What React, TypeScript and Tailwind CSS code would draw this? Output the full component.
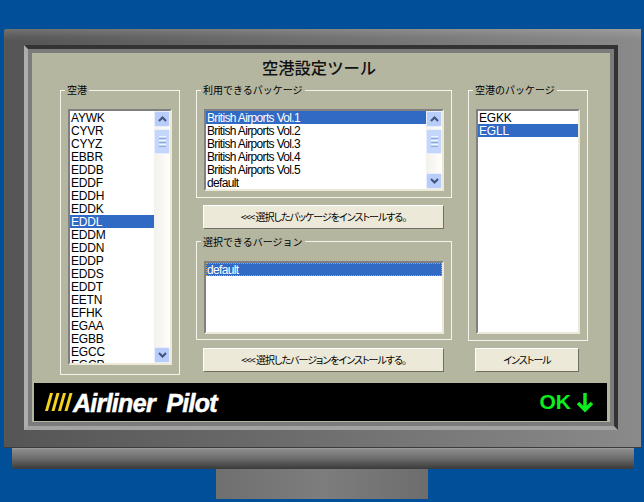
const airports = ['AYWK', 'CYVR', 'CYYZ', 'EBBR', 'EDDB', 'EDDF', 'EDDH', 'EDDK', 'EDDL', 'EDDM', 'EDDN', 'EDDP', 'EDDS', 'EDDT', 'EETN', 'EFHK', 'EGAA', 'EGBB', 'EGCC', 'EGCP']
const packages = ['British Airports Vol.1', 'British Airports Vol.2', 'British Airports Vol.3', 'British Airports Vol.4', 'British Airports Vol.5', 'default']

function Arrow({ up }: { up?: boolean }) {
  return (
    <div className="w-[16px] h-[16px] shrink-0 rounded-[2px] bg-[#b9cdfa] border border-[#e8eefc] flex items-center justify-center">
      <svg width="9" height="6" viewBox="0 0 9 6" fill="none" stroke="#3f5378" strokeWidth="2">
        <path d={up ? 'M1 5 L4.5 1.5 L8 5' : 'M1 1 L4.5 4.5 L8 1'} />
      </svg>
    </div>
  )
}

function Scrollbar() {
  return (
    <div className="w-[16px] h-full shrink-0 bg-gradient-to-r from-[#f3f1ec] to-[#fefefb] flex flex-col justify-between">
      <Arrow up />
      <div className="flex-1 pt-[2px]">
        <div className="w-[16px] h-[25px] rounded-[2px] bg-[#c5d6fc] border border-[#e8eefc] flex flex-col items-center justify-center gap-[1px]">
          <div className="w-[7px] h-[1px] bg-[#eef3fe]" />
          <div className="w-[7px] h-[1px] bg-[#8fa9dc]" />
          <div className="w-[7px] h-[1px] bg-[#eef3fe]" />
          <div className="w-[7px] h-[1px] bg-[#8fa9dc]" />
          <div className="w-[7px] h-[1px] bg-[#eef3fe]" />
          <div className="w-[7px] h-[1px] bg-[#8fa9dc]" />
        </div>
      </div>
      <Arrow />
    </div>
  )
}

function ListBox({ items, selected, className, scroll, focus }: { items: string[]; selected: number; className: string; scroll?: boolean; focus?: boolean }) {
  return (
    <div className={`flex overflow-hidden bg-white border-2 border-t-[#808080] border-l-[#808080] border-r-[#ece9d8] border-b-[#ece9d8] font-['Liberation_Sans',sans-serif] text-[12px] leading-[15px] ${className}`}>
      <div className="flex-1 min-w-0 h-full overflow-hidden">
        {items.map((item, i) => (
          <div
            key={item + i}
            className={`h-[13px] pl-[1px] whitespace-nowrap ${i === selected ? 'bg-[#316ac5] text-white' : 'text-black'} ${i === selected && focus ? 'outline-1 outline-dotted outline-[#c9a24a] -outline-offset-1' : ''} ${item.length > 4 ? 'tracking-[-0.65px]' : 'tracking-[-0.2px]'}`}
          >
            {item}
          </div>
        ))}
      </div>
      {scroll && <Scrollbar />}
    </div>
  )
}

function Group({ title, className, children }: { title: string; className: string; children: React.ReactNode }) {
  return (
    <fieldset className={`border border-[#f4f4ec] ${className}`}>
      <legend className="ml-[-3px] px-[2px] text-[10px] leading-[12px] text-black">{title}</legend>
      {children}
    </fieldset>
  )
}

function PushButton({ label, className }: { label: string; className: string }) {
  return (
    <button className={`h-[24px] bg-[#ece9d8] border border-t-white border-l-white border-r-[#716f64] border-b-[#716f64] text-[10px] leading-[22px] text-black text-center whitespace-nowrap tracking-[-1px] [font-feature-settings:'palt'] ${className}`}>
      {label}
    </button>
  )
}

export default function App() {
  return (
    <div className="w-[644px] h-[502px] overflow-hidden bg-[#004f98] pt-[29px] font-['Noto_Sans_CJK_JP',sans-serif]">
      {/* monitor */}
      <div className="ml-[4px] w-[637px] h-[419px] pt-[16px] pl-[20px] rounded-tl-[2px] bg-gradient-to-r from-[#555555] via-[#6f6f6f] to-[#8a8a8a] shadow-[inset_0_10px_10px_-6px_rgba(255,255,255,0.2)] border-b border-[#3c3c3c]">
        <div className="w-[594px] h-[385px] border-[4px] border-t-[#333333] border-r-[#333333] border-l-[#adadad] border-b-[#a3a3a3]">
          <div className="w-full h-full border-[4px] border-[#7c7c7c] bg-[#b5b6a0]">
            <div className="h-[30px] flex items-center justify-center pr-[4px] pb-[2px] text-[16.3px] leading-[20px] font-medium text-[#111]">空港設定ツール</div>

            <div className="h-[289px] flex gap-[16px] pl-[28px] pt-[1px]">
              <div className="w-[120px]">
                <Group title="空港" className="h-[291px] pl-[7px] pt-[13px]">
                  <ListBox items={airports} selected={8} scroll className="w-[104px] h-[256px]" />
                </Group>
              </div>

              <div className="w-[256px] flex flex-col">
                <Group title="利用できるパッケージ" className="h-[115px] pl-[7px] pt-[13px]">
                  <ListBox items={packages} selected={0} scroll className="w-[240px] h-[82px]" />
                </Group>
                <PushButton label="<<< 選択したパッケージをインストールする。" className="w-[241px] ml-[7px] mt-[7px]" />
                <Group title="選択できるバージョン" className="h-[105px] mt-[7px] pl-[7px] pt-[13px]">
                  <ListBox items={['default']} selected={0} focus className="w-[240px] h-[73px]" />
                </Group>
                <PushButton label="<<< 選択したバージョンをインストールする。" className="w-[241px] ml-[7px] mt-[8px]" />
              </div>

              <div className="w-[120px] flex flex-col">
                <Group title="空港のパッケージ" className="h-[259px] pl-[7px] pt-[13px]">
                  <ListBox items={['EGKK', 'EGLL']} selected={1} className="w-[104px] h-[225px]" />
                </Group>
                <PushButton label="インストール" className="w-[104px] ml-[7px] mt-[7px]" />
              </div>
            </div>

            {/* branding strip */}
            <div className="mx-[2px] mt-[11px] w-[573px] h-[38px] bg-black flex items-center justify-between pl-[11px] pr-[13px]">
              <div className="flex items-center">
                <svg width="28" height="20" viewBox="0 0 28 20" fill="#f5d320">
                  <polygon points="5,1 8,1 3,19 0,19" />
                  <polygon points="11.5,1 14.5,1 9.5,19 6.5,19" />
                  <polygon points="18,1 21,1 16,19 13,19" />
                  <polygon points="24.5,1 27.5,1 22.5,19 19.5,19" />
                </svg>
                <span className="pt-[1px] font-['Liberation_Sans',sans-serif] font-bold italic text-[25px] leading-[30px] text-white tracking-[-0.7px] [word-spacing:5px] [-webkit-text-stroke:0.5px_white] whitespace-nowrap">Airliner Pilot</span>
              </div>
              <div className="flex items-center gap-[5px]">
                <span className="font-['Liberation_Sans',sans-serif] font-bold text-[21px] leading-[26px] text-[#0bef1e]">OK</span>
                <svg width="18" height="21" viewBox="0 0 18 21" fill="none" stroke="#0bef1e" strokeWidth="3.5">
                  <path d="M9 1 V18 M2 11 L9 18 L16 11" />
                </svg>
              </div>
            </div>
          </div>
        </div>
      </div>

      {/* stand */}
      <div className="ml-[12px] w-[622px] h-[21px] rounded-b-[3px] bg-gradient-to-b from-[#8e8e8e] via-[#6a6a6a] to-[#3a3a3a] border-t border-[#9a9a9a]" />
      <div className="ml-[216px] w-[212px] h-[30px] bg-gradient-to-r from-[#6f6f6f] via-[#7d7d7d] to-[#6d6d6d]" />
    </div>
  )
}
